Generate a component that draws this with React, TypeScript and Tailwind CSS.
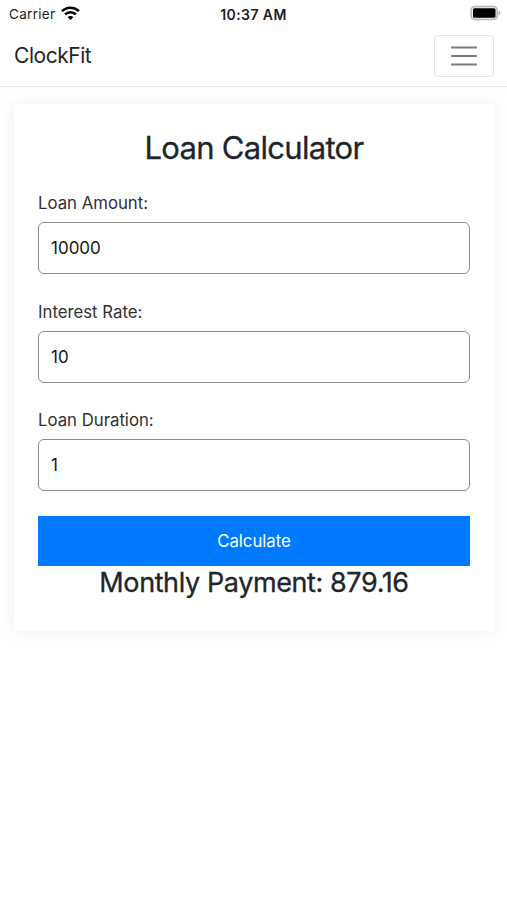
import { useState } from 'react';

const StatusBar = () => (
  <div className="grid h-[27px] grid-cols-3 items-center px-2 text-[13.5px] leading-[27px] text-[#1c1c1e]">
    <div className="flex items-center gap-1.5 pl-px">
      <span className="pt-px tracking-[0.3px]">Carrier</span>
      <svg className="-mt-0.5" width="19" height="14" viewBox="0 0 19 14" fill="none" stroke="#000" strokeWidth="2.5">
        <path d="M1 5.1C5.7.5 13.3.5 18 5.1" />
        <path d="M4.1 8.3c3-2.9 7.8-2.9 10.8 0" />
        <path d="M9.5 14 6.6 11c1.6-1.5 4.2-1.5 5.8 0z" fill="#000" stroke="none" />
      </svg>
    </div>
    <span className="text-center text-[14px] font-semibold tracking-[0.4px]">10:37 AM</span>
    <svg className="-mr-[1.5px] -mt-0.5 justify-self-end" width="31" height="16" viewBox="0 0 31 16">
      <rect x="1.2" y="1.5" width="26" height="13" rx="3.5" fill="#eee" stroke="#b9b9b9" strokeWidth="1.6" />
      <rect x="3" y="3.2" width="22.5" height="9.6" rx="1.5" fill="#000" />
      <path d="M28.7 5.6c2 .8 2 4 0 4.8z" fill="#a6a6a6" />
    </svg>
  </div>
);

const Navbar = () => (
  <nav className="flex h-[59px] items-center justify-between pb-px pl-3.5 pr-[13px]">
    <span className="pb-px text-[21px] leading-7 tracking-[-0.45px] text-[#242424]">ClockFit</span>
    <button
      aria-label="Toggle navigation"
      className="flex h-[42px] w-[60px] items-center justify-center rounded-[4px] border border-[#e5e5e5]"
    >
      <svg width="26" height="22" viewBox="0 0 26 22" stroke="#7b7b7b" strokeWidth="2" strokeLinecap="round">
        <path d="M1 2.4h24M1 11h24M1 19.6h24" />
      </svg>
    </button>
  </nav>
);

type FieldProps = {
  label: string;
  value: string;
  onChange: (value: string) => void;
};

const Field = ({ label, value, onChange }: FieldProps) => (
  <label className="block">
    <span className="mb-1.5 block pt-px text-[16.75px] leading-[25px] text-[#2e3134]">{label}</span>
    <input
      value={value}
      onChange={(e) => onChange(e.target.value)}
      className="block h-[52px] w-full rounded-[6px] border border-[#8c8c8c] bg-white px-3 text-[17px] text-[#151515] outline-none"
    />
  </label>
);

const monthlyPayment = (amount: number, rate: number, years: number) => {
  const r = rate / 1200;
  return (amount * r) / (1 - Math.pow(1 + r, -years * 12));
};

export default function App() {
  const [amount, setAmount] = useState('10000');
  const [rate, setRate] = useState('10');
  const [duration, setDuration] = useState('1');
  const [payment, setPayment] = useState('879.16');

  const calculate = () => setPayment(monthlyPayment(+amount, +rate, +duration).toFixed(2));

  return (
    <div className="min-h-screen overflow-hidden bg-white font-['Inter',sans-serif]">
      <header className="relative z-10 border-b border-[#e9e9e9] bg-white shadow-[0_1px_2px_rgba(0,0,0,0.03)]">
        <StatusBar />
        <Navbar />
      </header>
      <main className="ml-3.5 mr-[13px] mt-[17px] h-[527px] bg-white px-6 pt-6 shadow-[0_0_14px_rgba(0,0,0,0.07)]">
        <h1 className="mb-[23px] text-center text-[31px] leading-[39px] font-normal tracking-[-0.7px] text-[#212529] [-webkit-text-stroke:0.3px]">
          Loan Calculator
        </h1>
        <div className="flex flex-col gap-[24.6px]">
          <Field label="Loan Amount:" value={amount} onChange={setAmount} />
          <Field label="Interest Rate:" value={rate} onChange={setRate} />
          <Field label="Loan Duration:" value={duration} onChange={setDuration} />
          <button onClick={calculate} className="block h-[50px] w-full bg-[#007bff] pt-0.5 text-[16.75px] text-white">
            Calculate
          </button>
        </div>
        <h2 className="text-center text-[27px] leading-[33px] font-normal tracking-[-0.4px] text-[#212529] [-webkit-text-stroke:0.3px]">
          Monthly Payment: {payment}
        </h2>
      </main>
    </div>
  );
}
